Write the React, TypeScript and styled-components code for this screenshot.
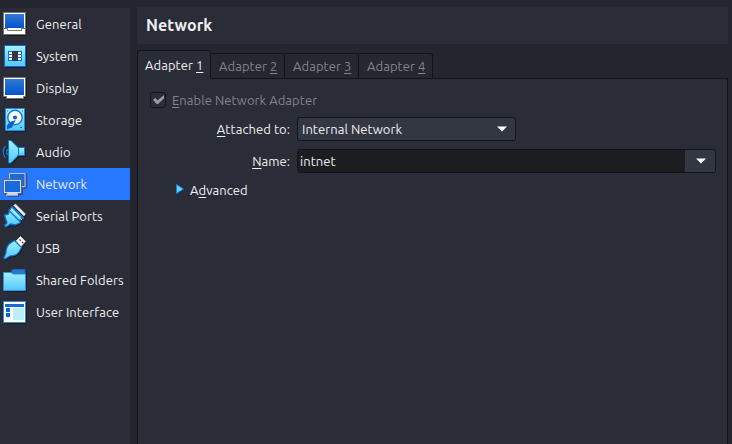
import React from "react";
import styled, { createGlobalStyle, css } from "styled-components";

const GlobalStyle = createGlobalStyle`
  * { box-sizing: border-box; }
  html, body, #root { height: 100%; }
  body {
    margin: 0;
    overflow: hidden;
    background: #23262e;
    color: #eeeeef;
    font: 13px/18px Ubuntu, "Noto Sans", sans-serif;
  }
`;

const Window = styled.div`
  display: flex;
  gap: 7px;
  width: 732px;
  height: 444px;
  padding: 7px 4px 0 0;
`;

const Sidebar = styled.nav`
  width: 130px;
  margin-top: 1px;
  background: #2a2c37;
  flex: none;
`;

const SidebarItem = styled.div<{ $selected?: boolean }>`
  display: flex;
  align-items: center;
  gap: 8px;
  height: 32px;
  white-space: nowrap;
  background: ${(p) => (p.$selected ? "#2777ff" : "transparent")};
`;

const Label = styled.span`
  letter-spacing: 0.06px;
  white-space: nowrap;
`;

const Icon = styled.svg`
  width: 28px;
  height: 32px;
  flex: none;
  filter: drop-shadow(1px 1px 0.5px rgba(0, 0, 0, 0.35));
`;

const Main = styled.main`
  display: flex;
  flex-direction: column;
  flex: 1;
`;

const Title = styled.h1`
  margin: 0 0 6px;
  height: 37px;
  padding-left: 9px;
  background: #2a2c37;
  font-size: 16px;
  line-height: 37px;
  font-weight: 700;
  letter-spacing: 0.1px;
`;

const Tabs = styled.div`
  display: flex;
  align-items: flex-end;
  height: 29px;
  margin-bottom: -1px;
  z-index: 1;
`;

const Tab = styled.div<{ $active?: boolean }>`
  width: 74px;
  height: 26px;
  padding: 3px 0 0 8px;
  white-space: nowrap;
  border: 1px solid #12141b;
  border-left-width: 0;
  border-radius: 0 3px 0 0;
  color: #828388;
  background: #262831;
  ${(p) =>
    p.$active &&
    css`
      height: 29px;
      padding: 5px 0 0 7px;
      border-left-width: 1px;
      border-bottom-color: #2a2c37;
      border-radius: 3px 3px 0 0;
      color: #eeeeef;
      background: #2a2c37;
    `}
`;

const Pane = styled.section`
  flex: 1;
  padding: 13px 11px 0 12px;
  border: 1px solid #12141b;
  border-bottom: 0;
  background: #2a2c37;
`;

const CheckRow = styled.div`
  display: flex;
  align-items: center;
  gap: 6px;
  height: 16px;
  color: #828388;
`;

const CheckBox = styled.span`
  display: grid;
  place-items: center;
  width: 16px;
  height: 16px;
  border: 1px solid #12141b;
  border-radius: 3px;
  background: #2a2c37;
`;

const Form = styled.div`
  display: grid;
  grid-template-columns: 140px 1fr;
  column-gap: 7px;
  row-gap: 8px;
  margin-top: 9px;
`;

const FieldName = styled.div`
  line-height: 24px;
  text-align: right;
`;

const Select = styled.div`
  display: flex;
  align-items: center;
  justify-content: space-between;
  width: 219px;
  height: 24px;
  padding: 0 7px 0 4px;
  border: 1px solid #12141b;
  border-radius: 3px;
  background: #333643;
`;

const Combo = styled.div`
  display: flex;
  height: 24px;
  border: 1px solid #12141b;
  border-radius: 3px;
  overflow: hidden;
`;

const ComboText = styled.div`
  flex: 1;
  padding-left: 2px;
  line-height: 22px;
  background: #1b1e21;
`;

const ComboButton = styled.div`
  display: grid;
  place-items: center;
  width: 30px;
  padding-left: 2px;
  background: #333643;
`;

const Advanced = styled.div`
  display: flex;
  align-items: center;
  gap: 6px;
  height: 18px;
  margin: 8px 0 0 26px;
`;

const Mnemonic = styled.span`
  text-decoration: underline;
  text-decoration-thickness: 1px;
  text-underline-offset: 2px;
  text-decoration-skip-ink: none;
`;

const Arrow = () => (
  <svg width="12" height="6" viewBox="0 0 12 6">
    <path d="M1 .5h10L6 5.6z" fill="#fff" />
  </svg>
);

const Defs = () => (
  <defs>
    <linearGradient id="screen" x2="0" y2="1">
      <stop stopColor="#3278d3" />
      <stop offset="1" stopColor="#0055cf" />
    </linearGradient>
    <linearGradient id="sky" x2="0" y2="1">
      <stop stopColor="#a5efff" />
      <stop offset="1" stopColor="#50c8fb" />
    </linearGradient>
  </defs>
);

const icons: Record<string, React.ReactNode> = {
  General: (
    <>
      <path d="M3.5 4.5h22v22h-22z" fill="#fff" stroke="#77736e" />
      <path d="M5 6h19v14H5z" fill="url(#screen)" />
      <path d="M4 20.5h3.5v2h14v-2H25" fill="none" stroke="#77736e" />
    </>
  ),
  System: (
    <>
      <path d="M4.5 5.5h21v21h-21z" fill="url(#sky)" stroke="#0b6bd3" />
      <path d="M8 11h14v10H8z" fill="#1670cf" />
      <path d="M9 12h3v2H9zm0 3h3v2H9zm0 3h3v2H9zM18 12h3v2h-3zm0 3h3v2h-3zm0 3h3v2h-3z" fill="#fff" />
      <path d="M12 11h6v10h-6z" fill="#34373e" />
    </>
  ),
  Display: (
    <>
      <path d="M3.5 5.5h22v19h-2v2h-17v-2h-3z" fill="#fff" stroke="#77736e" />
      <path d="M5 7h19v16H5z" fill="url(#screen)" />
    </>
  ),
  Storage: (
    <>
      <path d="M5.5 4.5h19v22h-19z" fill="url(#sky)" stroke="#168ae4" />
      <circle cx="15" cy="13.500" r="7.2" fill="#fff" stroke="#1678d5" strokeWidth="1.4" />
      <circle cx="15" cy="13.5" r="2.1" fill="#0864c7" />
      <path d="m14.500 17-4.500 1.500-2.500 3.500v2.500l4-1.500z" fill="#0864c7" stroke="#0864c7" strokeWidth="1.2" />
      <path d="M20 23.500h2M7 7h1m14 0h1" stroke="#0b6bd3" />
    </>
  ),
  Audio: (
    <>
      <path d="M5.5 10Q1 16 5.5 22M8 13q-3 3 0 6" fill="none" stroke="#1678d5" strokeWidth="1.3" />
      <path d="M8.5 4.5H11l7.500 7.500v7L11 27H8.500z" fill="url(#sky)" stroke="#087be0" />
      <path d="M18.5 11.5h6v8h-6z" fill="url(#sky)" stroke="#087be0" />
    </>
  ),
  Network: (
    <>
      <path d="M9.500 5.500h16v13h-2v1h-14z" fill="#176bdd" stroke="#676b73" strokeWidth="1.600" />
      <path d="M9.500 5.500h15.500v13h-15.500z" fill="#176bdd" stroke="#c6cdd8" strokeWidth=".9" />
      <path d="M3.500 11.500h18v14H18v1.500H7v-1.500H3.500z" fill="#d2dcea" stroke="#62666c" />
      <path d="M5 13h15v11H5z" fill="#176bdd" />
      <path d="M6 27h12" stroke="#fff" />
    </>
  ),
  "Serial Ports": (
    <>
      <path d="m13.500 5.500 2-1.500L25.500 14 24 16z" fill="#f8fafc" stroke="#b5bcc6" strokeWidth=".6" />
      <path
        d="m12 6.500 11.500 11.500-3 .5-.5 4.500-5 2-4.500-1-4.500 3-1.500-1.500 2.500-2.500-2.500-8 4-1 1-4z"
        fill="url(#sky)"
        stroke="#0673d3"
        strokeWidth="1.300"
        strokeLinejoin="round"
      />
      <path d="m8.500 10 12 12M12 7l11.500 11.500" stroke="#0878d5" strokeWidth="1.300" />
      <path d="m11 9 11 11" stroke="#d2f7ff" strokeWidth=".8" />
    </>
  ),
  USB: (
    <>
      <path d="m16 9 4.500-4.500 5 5-5 5.500z" fill="#fff" stroke="#c9cdd2" />
      <path d="m19.500 7.500 1.200 1.200m1.300 1.300 1.200 1.200" stroke="#3c414b" strokeWidth="1.3" />
      <path d="m14.500 8.500 7 7-2.500 4.500q-3 4-9 4l-5 3-1.200-1.200L6 21q0-7 4.500-10z" fill="url(#sky)" stroke="#0875d6" strokeWidth="1.2" />
    </>
  ),
  "Shared Folders": (
    <>
      <path d="M11 9.5 12.5 5.5H25v5z" fill="#2877c9" stroke="#1766bd" />
      <path d="M3.5 8.5H11l2 1.5h12.5v16.5h-22z" fill="url(#sky)" stroke="#2794e6" />
    </>
  ),
  "User Interface": (
    <>
      <path d="M3.5 5.5h22v21h-22z" fill="#fff" stroke="#2791df" />
      <path d="M5 8h19v3H5z" fill="#1769cb" />
      <path d="M6 12h4v4H6zm0 5h4v4H6z" fill="#0965cf" />
      <path d="M13 12h11v12H13z" fill="#b9effa" />
    </>
  ),
};

const items = [
  "General",
  "System",
  "Display",
  "Storage",
  "Audio",
  "Network",
  "Serial Ports",
  "USB",
  "Shared Folders",
  "User Interface",
];

export default function App() {
  return (
    <>
      <GlobalStyle />
      <Window>
        <Sidebar>
          {items.map((name) => (
            <SidebarItem key={name} $selected={name === "Network"}>
              <Icon viewBox="0 0 28 32">
                <Defs />
                {icons[name]}
              </Icon>
              <Label>{name}</Label>
            </SidebarItem>
          ))}
        </Sidebar>
        <Main>
          <Title>Network</Title>
          <Tabs>
            {[1, 2, 3, 4].map((n) => (
              <Tab key={n} $active={n === 1}>
                <Label>
                  Adapter <Mnemonic>{n}</Mnemonic>
                </Label>
              </Tab>
            ))}
          </Tabs>
          <Pane>
            <CheckRow>
              <CheckBox>
                <svg width="14" height="12" viewBox="0 0 14 12">
                  <path d="M2 5.500 4.500 4l2 2.500L13 1v3.500L7 10H5.500z" fill="#9a9b9f" />
                </svg>
              </CheckBox>
              <Label>
                <Mnemonic>E</Mnemonic>nable Network Adapter
              </Label>
            </CheckRow>
            <Form>
              <FieldName>
                <Label>
                  <Mnemonic>A</Mnemonic>ttached to:
                </Label>
              </FieldName>
              <Select>
                <Label>Internal Network</Label>
                <Arrow />
              </Select>
              <FieldName>
                <Label>
                  <Mnemonic>N</Mnemonic>ame:
                </Label>
              </FieldName>
              <Combo>
                <ComboText>
                  <Label>intnet</Label>
                </ComboText>
                <ComboButton>
                  <Arrow />
                </ComboButton>
              </Combo>
            </Form>
            <Advanced>
              <svg width="8" height="12" viewBox="0 0 8 12">
                <path d="M.5.5 7.500 5 .5 9.500z" fill="#62d3ff" stroke="#1681ea" />
              </svg>
              <Label>
                A<Mnemonic>d</Mnemonic>vanced
              </Label>
            </Advanced>
          </Pane>
        </Main>
      </Window>
    </>
  );
}
